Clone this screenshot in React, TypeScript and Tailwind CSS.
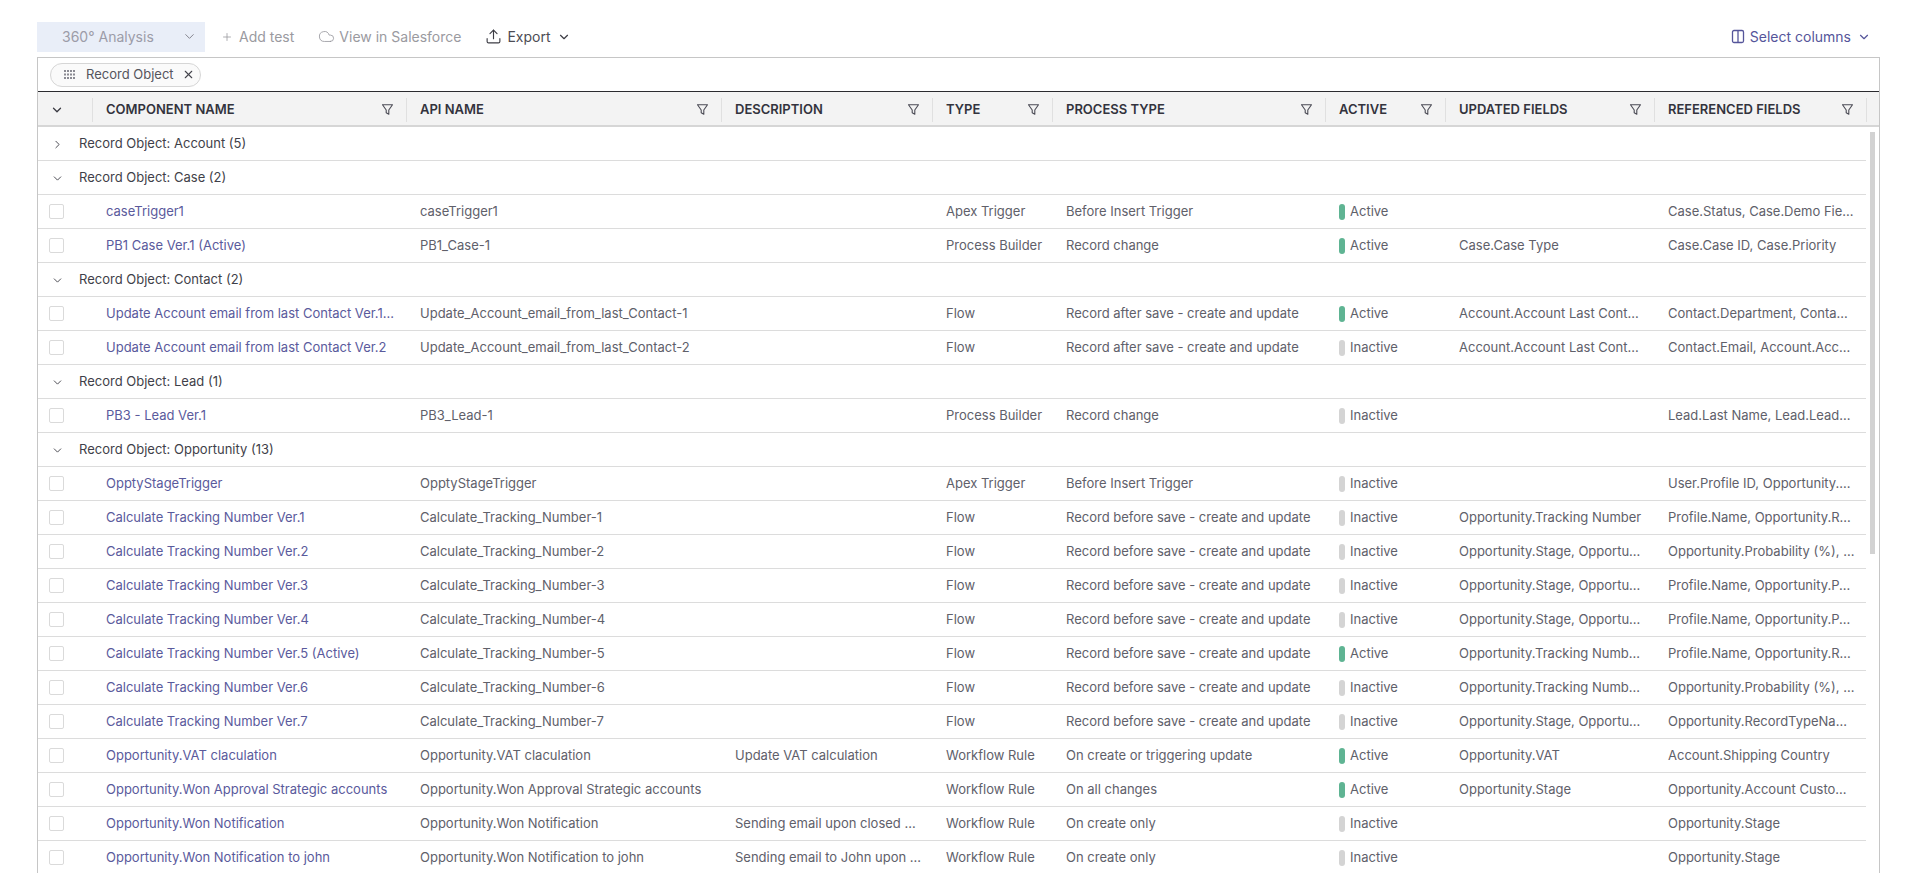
import React from "react";
import { ChevronDown, ChevronRight, Plus, Cloud, Upload, X } from "lucide-react";

const GRID = "grid grid-cols-[55px_314px_315px_211px_120px_273px_120px_209px_212px]";

const Filter = () => (
  <svg width="13" height="13" viewBox="0 0 13 13" fill="none" stroke="#4b4b55" strokeWidth="1.1" strokeLinejoin="round" className="shrink-0">
    <path d="M1.5 1.8h10L7.8 7v4.2L5.2 9.8V7z" />
  </svg>
);

const Grip = () => (
  <svg width="12" height="10" viewBox="0 0 12 10" fill="#8b8b93">
    {[0, 3, 6, 9].map((x) => [0, 3.5, 7].map((y) => <rect key={`${x}-${y}`} x={x} y={y} width="2" height="2" />))}
  </svg>
);

const ColumnsIcon = () => (
  <svg width="14" height="15" viewBox="0 0 14 15" fill="none" stroke="#55559a" strokeWidth="1.3">
    <rect x="1.5" y="1.5" width="11" height="12" rx="1.5" />
    <path d="M7 1.5v12" />
  </svg>
);

const headers = [
  "COMPONENT NAME",
  "API NAME",
  "DESCRIPTION",
  "TYPE",
  "PROCESS TYPE",
  "ACTIVE",
  "UPDATED FIELDS",
  "REFERENCED FIELDS",
];

type Row = { group: string; open: boolean } | { c: string[]; on: boolean };

const R = (name: string, api: string, desc: string, type: string, proc: string, on: boolean, upd: string, ref: string): Row => ({
  c: [name, api, desc, type, proc, upd, ref],
  on,
});
const G = (group: string, open = true): Row => ({ group, open });

const BS = "Record before save - create and update";
const AS = "Record after save - create and update";
const rows: Row[] = [
  G("Record Object: Account (5)", false),
  G("Record Object: Case (2)"),
  R("caseTrigger1", "caseTrigger1", "", "Apex Trigger", "Before Insert Trigger", true, "", "Case.Status, Case.Demo Fie..."),
  R("PB1 Case Ver.1 (Active)", "PB1_Case-1", "", "Process Builder", "Record change", true, "Case.Case Type", "Case.Case ID, Case.Priority"),
  G("Record Object: Contact (2)"),
  R("Update Account email from last Contact Ver.1...", "Update_Account_email_from_last_Contact-1", "", "Flow", AS, true, "Account.Account Last Cont...", "Contact.Department, Conta..."),
  R("Update Account email from last Contact Ver.2", "Update_Account_email_from_last_Contact-2", "", "Flow", AS, false, "Account.Account Last Cont...", "Contact.Email, Account.Acc..."),
  G("Record Object: Lead (1)"),
  R("PB3 - Lead Ver.1", "PB3_Lead-1", "", "Process Builder", "Record change", false, "", "Lead.Last Name, Lead.Lead..."),
  G("Record Object: Opportunity (13)"),
  R("OpptyStageTrigger", "OpptyStageTrigger", "", "Apex Trigger", "Before Insert Trigger", false, "", "User.Profile ID, Opportunity...."),
  R("Calculate Tracking Number Ver.1", "Calculate_Tracking_Number-1", "", "Flow", BS, false, "Opportunity.Tracking Number", "Profile.Name, Opportunity.R..."),
  R("Calculate Tracking Number Ver.2", "Calculate_Tracking_Number-2", "", "Flow", BS, false, "Opportunity.Stage, Opportu...", "Opportunity.Probability (%), ..."),
  R("Calculate Tracking Number Ver.3", "Calculate_Tracking_Number-3", "", "Flow", BS, false, "Opportunity.Stage, Opportu...", "Profile.Name, Opportunity.P..."),
  R("Calculate Tracking Number Ver.4", "Calculate_Tracking_Number-4", "", "Flow", BS, false, "Opportunity.Stage, Opportu...", "Profile.Name, Opportunity.P..."),
  R("Calculate Tracking Number Ver.5 (Active)", "Calculate_Tracking_Number-5", "", "Flow", BS, true, "Opportunity.Tracking Numb...", "Profile.Name, Opportunity.R..."),
  R("Calculate Tracking Number Ver.6", "Calculate_Tracking_Number-6", "", "Flow", BS, false, "Opportunity.Tracking Numb...", "Opportunity.Probability (%), ..."),
  R("Calculate Tracking Number Ver.7", "Calculate_Tracking_Number-7", "", "Flow", BS, false, "Opportunity.Stage, Opportu...", "Opportunity.RecordTypeNa..."),
  R("Opportunity.VAT claculation", "Opportunity.VAT claculation", "Update VAT calculation", "Workflow Rule", "On create or triggering update", true, "Opportunity.VAT", "Account.Shipping Country"),
  R("Opportunity.Won Approval Strategic accounts", "Opportunity.Won Approval Strategic accounts", "", "Workflow Rule", "On all changes", true, "Opportunity.Stage", "Opportunity.Account Custo..."),
  R("Opportunity.Won Notification", "Opportunity.Won Notification", "Sending email upon closed ...", "Workflow Rule", "On create only", false, "", "Opportunity.Stage"),
  R("Opportunity.Won Notification to john", "Opportunity.Won Notification to john", "Sending email to John upon ...", "Workflow Rule", "On create only", false, "", "Opportunity.Stage"),
];

const Cell = ({ children, className = "" }: { children?: React.ReactNode; className?: string }) => (
  <div className={`min-w-0 whitespace-nowrap pl-[13px] ${className}`}>{children}</div>
);

export default function App() {
  return (
    <div className="h-[873px] w-full overflow-hidden bg-white pl-[37px] pr-[39px] pt-[22px] text-[13px] text-[#60606a] font-['Inter',sans-serif]">
      <div className="flex h-[30px] items-center pr-[9px] text-[14px]">
        <div className="flex h-[30px] w-[168px] items-center justify-between bg-[#e9eef8] pb-[1px] pl-[25px] pr-[8px] text-[#9c9ca8]">
          <span>360° Analysis</span>
          <ChevronDown size={15} strokeWidth={1.6} className="text-[#85858f]" />
        </div>
        <div className="flex flex-1 items-center pb-[1px]">
          <Plus size={12} strokeWidth={1.6} className="ml-[16px] text-[#9a9a9f]" />
          <span className="ml-[6px] text-[#9a9a9f]">Add test</span>
          <Cloud size={17} strokeWidth={1.2} className="ml-[24px] text-[#9a9a9f]" />
          <span className="ml-[4px] text-[#9a9a9f]">View in Salesforce</span>
          <Upload size={17} strokeWidth={1.6} className="ml-[24px] text-[#3c3c44]" />
          <span className="ml-[5px] text-[#4c4c54]">Export</span>
          <ChevronDown size={14} strokeWidth={2} className="ml-[6px] text-[#3c3c44]" />
          <div className="ml-auto flex items-center text-[#55559a]">
            <ColumnsIcon />
            <span className="ml-[5px]">Select columns</span>
            <ChevronDown size={14} strokeWidth={2} className="ml-[6px]" />
          </div>
        </div>
      </div>

      <div className="mt-[5px] border-l border-r border-t border-[#c6c6c6]">
        <div className="flex h-[34px] items-center border-b border-[#2b2b2f] pl-[12px]">
          <div className="flex h-[24px] w-[151px] items-center rounded-full border border-[#d6d6d6] bg-[#fafafa] pl-[13px]">
            <Grip />
            <span className="ml-[10px] text-[#55555d]">Record Object</span>
            <X size={13} strokeWidth={2} className="ml-[8px] text-[#44444c]" />
          </div>
        </div>

        <div className={`${GRID} h-[35px] items-center border-b-2 border-[#d6d6d6] bg-[#f3f3f3] pt-[2px]`}>
          <div className="flex h-[24px] items-center border-r border-[#e0e0e0] pl-[12px]">
            <ChevronDown size={14} strokeWidth={2.2} className="text-[#3a3a42]" />
          </div>
          {headers.map((h) => (
            <div key={h} className="flex h-[24px] items-center justify-between border-r border-[#e0e0e0] pl-[13px] pr-[12px]">
              <span className="text-[13px] font-semibold text-[#33333d]">{h}</span>
              <Filter />
            </div>
          ))}
        </div>

        <div className="relative">
          <div className="absolute right-[4px] top-[5px] h-[422px] w-[5px] bg-[#d2d2d2]" />
          <div className="w-[1828px]">
            {rows.map((r, i) =>
              "group" in r ? (
                <div key={i} className="flex h-[34px] items-center border-b border-[#dcdcdc] pl-[13px] pt-[1px] text-[#3f3f49]">
                  {r.open ? (
                    <ChevronDown size={13} strokeWidth={1.8} className="text-[#4a4a52]" />
                  ) : (
                    <ChevronRight size={13} strokeWidth={1.8} className="text-[#4a4a52]" />
                  )}
                  <span className="ml-[15px]">{r.group}</span>
                </div>
              ) : (
                <div key={i} className={`${GRID} h-[34px] items-center border-b border-[#dcdcdc]`}>
                  <div className="pl-[11px]">
                    <div className="h-[15px] w-[15px] rounded-[2px] border border-[#dadada] bg-white" />
                  </div>
                  <Cell className="text-[#5a5a9c]">{r.c[0]}</Cell>
                  <Cell>{r.c[1]}</Cell>
                  <Cell>{r.c[2]}</Cell>
                  <Cell>{r.c[3]}</Cell>
                  <Cell>{r.c[4]}</Cell>
                  <div className="flex items-center pl-[13px]">
                    <span className={`h-[16px] w-[6px] rounded-[3px] ${r.on ? "bg-[#5fb493]" : "bg-[#d4d4d4]"}`} />
                    <span className="ml-[5px]">{r.on ? "Active" : "Inactive"}</span>
                  </div>
                  <Cell>{r.c[5]}</Cell>
                  <Cell>{r.c[6]}</Cell>
                </div>
              )
            )}
          </div>
        </div>
      </div>
    </div>
  );
}
